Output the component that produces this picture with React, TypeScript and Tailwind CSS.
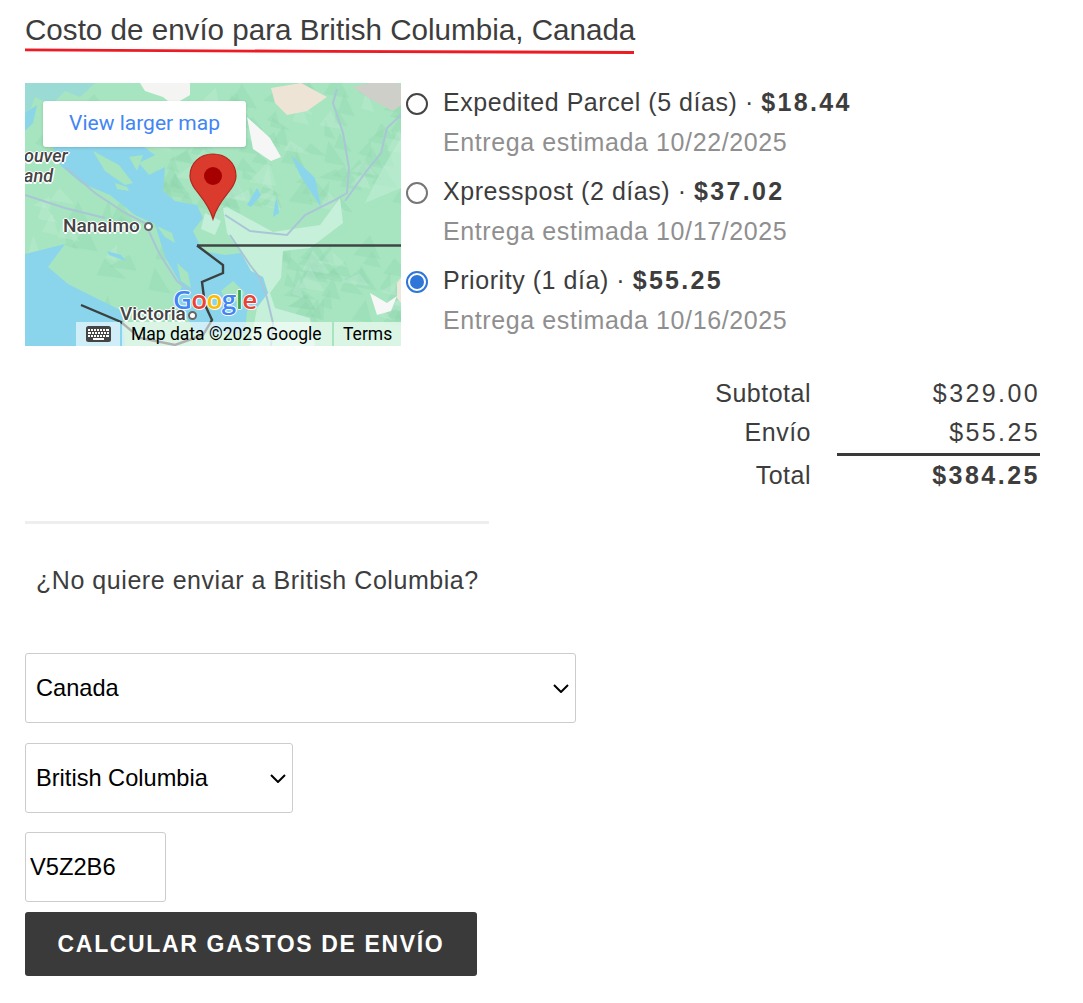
import React from "react";

// fixed pseudo random facets for the terrain shading
function makeFacets(x0: number, y0: number, x1: number, y1: number, count: number, seed: number) {
  const out: string[] = [];
  let s = seed;
  const next = () => {
    s = (s * 9301 + 49297) % 233280;
    return s / 233280;
  };
  for (let i = 0; i < count; i++) {
    const x = x0 + next() * (x1 - x0);
    const y = y0 + next() * (y1 - y0);
    const w = 10 + next() * 20;
    const h = 8 + next() * 14;
    const lean = (next() - 0.5) * 16;
    out.push(`${x.toFixed(1)},${y.toFixed(1)} ${(x + w / 2 + lean).toFixed(1)},${(y - h).toFixed(1)} ${(x + w).toFixed(1)},${(y + 4).toFixed(1)}`);
  }
  return out;
}

const shadows = [
  ...makeFacets(115, 5, 376, 130, 80, 11),
  ...makeFacets(250, 170, 376, 240, 36, 23),
  ...makeFacets(0, 10, 70, 70, 12, 37),
  ...makeFacets(10, 125, 135, 235, 12, 51),
];
const lights = [
  ...makeFacets(120, 10, 376, 125, 20, 73),
  ...makeFacets(260, 175, 376, 240, 10, 91),
  ...makeFacets(0, 110, 90, 180, 8, 17),
];

function MapArt() {
  return (
    <svg viewBox="0 0 376 263" className="absolute inset-0 w-full h-full" aria-hidden="true">
      <defs>
        <filter id="soft">
          <feGaussianBlur stdDeviation="0.6" />
        </filter>
      </defs>
      <g filter="url(#soft)">
        <rect width="376" height="263" fill="#a6e5bf" />
        {shadows.map((p) => (
          <polygon key={p} points={p} fill="#8dd3ab" opacity=".28" />
        ))}
        {lights.map((p) => (
          <polygon key={p} points={p} fill="#c6f0da" opacity=".3" />
        ))}
        {/* valley */}
        <path d="M198 125 202 124 248 149 295 142 315 115 318 140 285 165 258 168 256 195 245 210 250 225 285 235 290 263H225L232 225 243 210 238 194 226 188 215 168 202 150Z" fill="#c6f0da" />
        <path d="M376 55 355 90 340 120 376 105Z" fill="#c6f0da" opacity=".5" />
        {/* upper left inlets */}
        <path d="M0 0H70L55 14 40 8 26 22 10 14 4 30 0 34Z" fill="#9adbd6" />
        <path d="M0 30 12 22 8 40 0 48Z" fill="#8bd6e6" />
        {/* strait */}
        <path d="M28 63 116 62 130 72 114 80 124 92 140 84 138 108 150 118 172 122 178 135 168 148 178 168 200 172 216 170 226 188 238 194 243 210 232 224 222 228 220 250H172L150 218 157 203 140 174 130 141 110 132 85 112 56 100 35 82Z" fill="#8ad5ec" />
        {/* bottom left water */}
        <path d="M0 171 40 161 23 184 43 201 77 218 97 228 100 263H0Z" fill="#8ad5ec" />
        {/* islands in the strait */}
        <path d="M68 68 94 82 108 100 100 102 80 88Z" fill="#a6e5bf" />
        <path d="M104 74 118 72 112 88Z" fill="#a6e5bf" />
        <path d="M90 100 102 104 104 108 92 106Z" fill="#a6e5bf" />
        <path d="M132 143 147 150 150 160 140 154Z" fill="#a6e5bf" />
        <path d="M152 180 163 190 166 205 156 198Z" fill="#a6e5bf" />
        <path d="M196 208 208 198 220 210 212 218 200 216Z" fill="#a6e5bf" />
        <path d="M180 130 196 138 190 152 176 146Z" fill="#c4efd8" />
        {/* lakes */}
        <path d="M266 72 290 95 296 124 288 112 275 92Z" fill="#8ad5ec" />
        <path d="M232 105 236 112 226 124 222 122Z" fill="#8ad5ec" />
        <path d="M252 115 254 130 248 134 250 120Z" fill="#8ad5ec" />
        <path d="M84 172 101 178 96 172 82 168Z" fill="#8ad5ec" />
        {/* snow and rock */}
        <path d="M115 0H165V12L148 22 138 14 120 8Z" fill="#f4f5f3" />
        <path d="M222 34 245 55 256 74 246 78 228 66Z" fill="#f6f6f6" />
        <path d="M246 5 276 0 302 14 282 28 262 32 250 20Z" fill="#ede4d6" />
        <path d="M328 4 345 0 372 0 390 12 368 28 345 16Z" fill="#cfcfc9" />
        <path d="M345 210 362 220 372 213 366 228 352 232Z" fill="#f7f7f7" />
        <path d="M372 200 376 195V220L372 215Z" fill="#eee8dc" />
        {/* roads */}
        <g fill="none" stroke="#a9c6d6" strokeWidth="2">
          <path d="M312 6 308 20 318 50 324 85 322 110 308 118 280 132 262 152 225 148 200 132" />
          <path d="M376 32 362 45 356 70 340 90 320 118" />
          <path d="M40 84 70 110 100 130 120 140 134 170 152 198 165 208" />
          <path d="M205 152 225 182 235 195 242 215 248 240 246 263" />
          <path d="M0 112 40 125 80 135" />
        </g>
        {/* borders */}
        <path d="M172 162.5H376" stroke="#3f4444" strokeWidth="2.4" fill="none" />
        <path d="M172 162.5 198 182V190L177 199 180 222 187 237 178 252 150 262 115 255 96 239 56 222" stroke="#3a3f3f" strokeWidth="2.4" fill="none" />
      </g>
      {/* pin */}
      <path d="M188 136C184 122 176 114 170 106 166 100 165 96 165 93 165 80 175 71 188 71 201 71 211 80 211 93 211 96 210 100 206 106 200 114 192 122 188 136Z" fill="#db3b2d" stroke="#b3261e" strokeWidth="1.2" />
      <circle cx="188" cy="93" r="9" fill="#a60000" />
    </svg>
  );
}

function MapBlock() {
  const halo = "[text-shadow:-1.5px_0_#fff,1.5px_0_#fff,0_-1.5px_#fff,0_1.5px_#fff]";
  return (
    <div className="relative w-[376px] h-[263px] shrink-0 overflow-hidden font-['Roboto',sans-serif]">
      <MapArt />
      <a className="absolute left-[18px] top-[18px] w-[203px] h-[46px] flex items-center justify-center bg-white rounded-[3px] text-[#4285f4] text-[21px] shadow-[0_1px_3px_rgba(0,0,0,0.15)]">
        View larger map
      </a>
      <span className={`absolute left-0 top-[63px] leading-[20px] text-[18px] italic font-medium text-[#444] whitespace-pre -ml-[1px] ${halo}`}>
        ouver{"\n"}and
      </span>
      <span className={`absolute left-[38px] top-[131px] text-[19px] font-medium leading-[24px] text-[#444] ${halo}`}>
        Nanaimo
      </span>
      <span className="absolute left-[119px] top-[139px] w-[9px] h-[9px] rounded-full bg-white border-2 border-[#666]" />
      <span className={`absolute left-[95px] top-[220px] text-[19px] font-medium leading-[22px] text-[#444] ${halo}`}>
        Victoria
      </span>
      <span className="absolute left-[163px] top-[228px] w-[9px] h-[9px] rounded-full bg-white border-2 border-[#666]" />
      <span className="absolute left-[148px] top-[202px] flex text-[26px] font-semibold leading-[28px] tracking-[-0.6px] font-['Open_Sans',sans-serif] [text-shadow:-1px_0_#fff,1px_0_#fff,0_-1px_#fff,0_1px_#fff]">
        <span className="text-[#4285f4]">G</span>
        <span className="text-[#ea4335]">o</span>
        <span className="text-[#fbbc05]">o</span>
        <span className="text-[#4285f4]">g</span>
        <span className="text-[#34a853]">l</span>
        <span className="text-[#ea4335]">e</span>
      </span>
      <div className="absolute left-[51px] right-0 bottom-0 h-[24px] flex text-[17.5px] leading-[24px] text-black">
        <div className="w-[44px] bg-white/60 flex items-center justify-center">
          <svg viewBox="0 0 25 16" className="w-[25px] h-[16px]" aria-hidden="true">
            <rect width="25" height="16" rx="2.5" fill="#444" />
            <path d="M2 3h2v2H2zM5 3h2v2H5zM8 3h2v2H8zM11 3h2v2h-2zM14 3h2v2h-2zM17 3h2v2h-2zM20 3h3v2h-3zM2 6h3v2H2zM6 6h2v2H6zM9 6h2v2H9zM12 6h2v2h-2zM15 6h2v2h-2zM18 6h2v2h-2zM21 6h2v2h-2zM2 9h2v2H2zM5 9h2v2H5zM8 9h2v2H8zM11 9h2v2h-2zM14 9h2v2h-2zM17 9h2v2h-2zM20 9h3v2h-3z" fill="#fff" />
            <path d="M7 12h11v2H7z" fill="#fff" />
          </svg>
        </div>
        <div className="ml-[2px] w-[210px] bg-white/60 pl-[9px]">Map data ©2025 Google</div>
        <div className="ml-[2px] flex-1 bg-white/60 pl-[9px]">Terms</div>
      </div>
    </div>
  );
}

function ShippingOption({
  label,
  price,
  date,
  checked,
  ring,
}: {
  label: string;
  price: string;
  date: string;
  checked?: boolean;
  ring: string;
}) {
  return (
    <label className="flex gap-[15px] h-[89px] pt-[1px]">
      <span className={`mt-[9px] w-[22px] h-[22px] rounded-full border-2 bg-white shrink-0 flex items-center justify-center ${ring}`}>
        {checked && <span className="w-[14px] h-[14px] rounded-full bg-[#2f76d8]" />}
      </span>
      <span className="block">
        <span className="block h-[40px] leading-[36px] text-[25px] tracking-[0.55px] text-[#3d3d3d] whitespace-nowrap">
          {label} · <strong className="font-bold tracking-[2.3px]">{price}</strong>
        </span>
        <span className="block h-[40px] leading-[36px] text-[25px] tracking-[0.6px] text-[#8f8f8f] whitespace-nowrap">
          Entrega estimada {date}
        </span>
      </span>
    </label>
  );
}

function Dropdown({ label, width, top }: { label: string; width: string; top: string }) {
  return (
    <div className={`relative ${width} ${top}`}>
      <select className="appearance-none w-full h-[70px] pl-[10px] pt-[2px] border border-[#cccccc] rounded-[3px] bg-white text-[23.6px] text-black">
        <option>{label}</option>
      </select>
      <svg viewBox="0 0 16 9" className="absolute right-[7px] top-[31px] w-[16px] h-[9px] pointer-events-none" aria-hidden="true">
        <path d="M1 1 8 8 15 1" fill="none" stroke="#000" strokeWidth="2" />
      </svg>
    </div>
  );
}

export default function App() {
  return (
    <div className="h-[1003px] w-[1083px] bg-white pl-[25px] overflow-hidden font-['Liberation_Sans',Arial,sans-serif] text-[#3d3d3d]">
      <div className="relative w-[612px] h-[83px]">
        <h2 className="pt-[12px] text-[29.6px] leading-[36px] font-normal whitespace-nowrap">
          Costo de envío para British Columbia, Canada
        </h2>
        <svg viewBox="0 0 612 6" className="absolute left-0 top-[48px] w-[612px] h-[6px]" aria-hidden="true">
          <path d="M0 0.4 300 2 609 3V6L300 4.8 0 3.2Z" fill="#ed1c24" />
        </svg>
      </div>

      <div className="flex gap-[5px]">
        <MapBlock />
        <div>
          <ShippingOption label="Expedited Parcel (5 días)" price="$18.44" date="10/22/2025" ring="border-[#444]" />
          <ShippingOption label="Xpresspost (2 días)" price="$37.02" date="10/17/2025" ring="border-[#767676]" />
          <ShippingOption label="Priority (1 día)" price="$55.25" date="10/16/2025" checked ring="border-[#2f76d8]" />
        </div>
      </div>

      <div className="ml-auto mt-[24px] w-[339px] mr-[43px] grid grid-cols-[110px_203px] gap-x-[26px] text-[25px] tracking-[0.5px] text-right">
        <div className="h-[39px] leading-[39px]">Subtotal</div>
        <div className="h-[39px] leading-[39px] tracking-[2.4px]">$329.00</div>
        <div className="h-[43px] leading-[39px]">Envío</div>
        <div className="h-[43px] leading-[39px] tracking-[2.4px] border-b-[3px] border-[#3a3a3a]">$55.25</div>
        <div className="h-[44px] leading-[38px]">Total</div>
        <div className="h-[44px] leading-[38px] font-bold tracking-[2.5px]">$384.25</div>
      </div>

      <div className="mt-[21px] w-[464px] h-[3px] bg-[#eeeeee]" />

      <p className="mt-[38px] ml-[11px] text-[25px] leading-[36px] tracking-[0.55px]">¿No quiere enviar a British Columbia?</p>

      <form className="mt-[55px] flex flex-col items-start">
        <Dropdown label="Canada" width="w-[551px]" top="mt-0" />
        <Dropdown label="British Columbia" width="w-[268px]" top="mt-[20px]" />
        <input
          readOnly
          value="V5Z2B6"
          className="mt-[19px] w-[141px] h-[70px] pl-[4px] border border-[#cccccc] rounded-[3px] text-[23.7px] text-black"
        />
        <button
          type="button"
          className="mt-[10px] w-[452px] h-[64px] rounded-[3px] bg-[#3a3a3a] text-white text-[23px] font-bold tracking-[1.65px]"
        >
          CALCULAR GASTOS DE ENVÍO
        </button>
      </form>
    </div>
  );
}
